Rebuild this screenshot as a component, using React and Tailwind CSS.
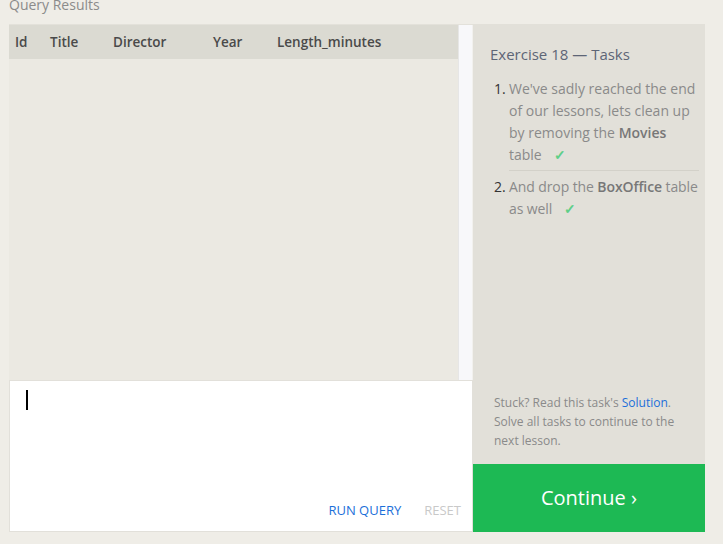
const columns = [
  { name: 'Id', w: 'w-[35px]' },
  { name: 'Title', w: 'w-[63px]' },
  { name: 'Director', w: 'w-[100px]' },
  { name: 'Year', w: 'w-[64px]' },
  { name: 'Length_minutes', w: 'w-[150px]' },
];

const Check = () => (
  <span className="ml-[12px] text-[#5fcf88] font-bold">✓</span>
);

export default function App() {
  return (
    <div
      className="h-[544px] w-[723px] overflow-hidden bg-[#efede7] pl-[9px] pr-[18px]"
      style={{ fontFamily: '"Open Sans", "Liberation Sans", sans-serif' }}
    >
      {/* Heading, clipped by the top of the window */}
      <div className="h-[24px]">
        <div className="-translate-y-[5px] text-[14px] leading-[20px] text-[#8b8b8b]">Query Results</div>
      </div>

      <div className="flex h-[508px]">
        {/* Left: results + editor */}
        <div className="flex w-[464px] flex-col">
          <div className="flex h-[356px] border-t border-[#e3e1da] bg-[#ebe9e2]">
            <div className="flex-1">
              <div className="flex h-[34px] items-center bg-[#dbdad2] pl-[6px] text-[13.5px] font-semibold text-[#4a4a4a]">
                {columns.map((c) => (
                  <div key={c.name} className={c.w}>{c.name}</div>
                ))}
              </div>
            </div>
            <div className="w-[14px] border-l border-[#e6e6e6] bg-[#f8f8fa]" />
            <div className="w-px bg-[#f2f1ee]" />
          </div>
          <div className="flex flex-1 flex-col border border-[#e2e0da] bg-white">
            <div className="flex-1 pl-[16px] pt-[9px]">
              <div className="h-[20px] w-[2px] bg-black" />
            </div>
            <div className="flex h-[30px] items-start justify-end gap-[23px] pr-[11px] text-[13px] font-medium">
              <span className="text-[#1c6fd9]">RUN QUERY</span>
              <span className="text-[#c9c9c9]">RESET</span>
            </div>
          </div>
        </div>

        {/* Right: tasks */}
        <div className="flex w-[232px] flex-col bg-[#e2e0d9]">
          <div className="flex-1 pl-[17px] pr-[6px] pt-[19px]">
            <h2 className="text-[15px] leading-[22px] text-[#5d6576]">Exercise 18 — Tasks</h2>
            <ol className="mt-[13px] text-[14px] leading-[22px] text-[#8a8a8a]">
              <li className="flex">
                <span className="w-[19px] shrink-0 pl-[4px] text-[#333]">1.</span>
                <div className="flex-1 border-b border-[#d3d1c9] pb-[4px]">
                  We've sadly reached the end of our lessons, lets clean up by removing the{' '}
                  <b className="font-semibold text-[#777]">Movies</b> table
                  <Check />
                </div>
              </li>
              <li className="mt-[5px] flex">
                <span className="w-[19px] shrink-0 pl-[4px] text-[#333]">2.</span>
                <div className="flex-1 tracking-[-0.1px]">
                  And drop the <b className="font-semibold text-[#777]">BoxOffice</b> table as well
                  <Check />
                </div>
              </li>
            </ol>
          </div>
          <div className="px-[21px] pb-[14px] text-[12px] leading-[19px] text-[#8a8a8a]">
            Stuck? Read this task's <span className="text-[#1c6fd9]">Solution</span>.
            <br />
            Solve all tasks to continue to the next lesson.
          </div>
          <div className="flex h-[68px] items-center justify-center bg-[#1db954] text-[20px] font-medium text-white">
            Continue ›
          </div>
        </div>
      </div>
    </div>
  );
}
